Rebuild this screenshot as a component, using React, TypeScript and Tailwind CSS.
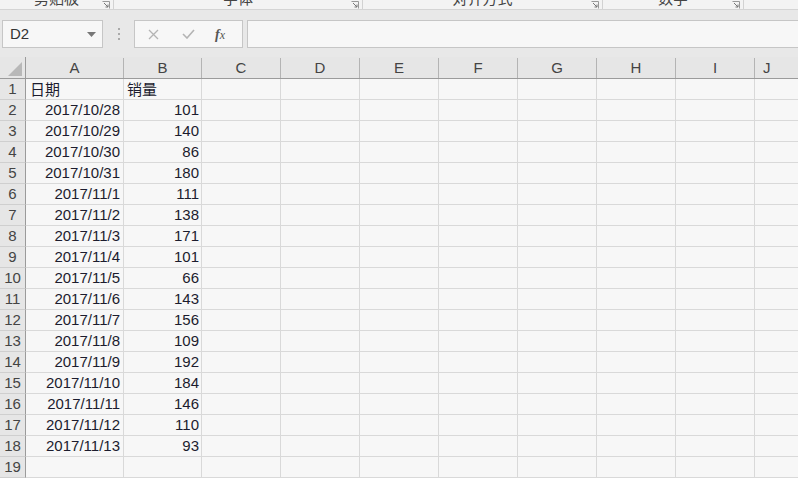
import React from 'react';

const rows: [string, string][] = [
  ['日期', '销量'],
  ['2017/10/28', '101'],
  ['2017/10/29', '140'],
  ['2017/10/30', '86'],
  ['2017/10/31', '180'],
  ['2017/11/1', '111'],
  ['2017/11/2', '138'],
  ['2017/11/3', '171'],
  ['2017/11/4', '101'],
  ['2017/11/5', '66'],
  ['2017/11/6', '143'],
  ['2017/11/7', '156'],
  ['2017/11/8', '109'],
  ['2017/11/9', '192'],
  ['2017/11/10', '184'],
  ['2017/11/11', '146'],
  ['2017/11/12', '110'],
  ['2017/11/13', '93'],
  ['', ''],
];

const otherCols = ['C', 'D', 'E', 'F', 'G', 'H', 'I'];

const font = { fontFamily: '"Liberation Sans", Arial, "Noto Sans CJK SC", sans-serif' };

const RibbonGroup = ({ label, width }: { label: string; width: string }) => (
  <div className={`relative flex h-full justify-center border-r border-[#d2d2d2] ${width}`}>
    <span className="absolute -top-[10px] text-[15px] leading-[18px] text-[#444]">{label}</span>
    <svg className="absolute right-[3px] top-[1px]" width="8" height="8" viewBox="0 0 8 8">
      <path d="M0.5 0.5h7v7" fill="none" stroke="#999" />
      <path d="M2 2l4 4M6 3.5V6H3.5" fill="none" stroke="#777" />
    </svg>
  </div>
);

export default function App() {
  return (
    <div className="h-[478px] w-[798px] overflow-hidden bg-[#e8e8e8]" style={font}>
      {/* ribbon group labels, cut off at the top */}
      <div className="flex h-[10px] overflow-hidden border-b border-[#d4d4d4] bg-[#f3f3f3]">
        <RibbonGroup label="剪贴板" width="w-[114px]" />
        <RibbonGroup label="字体" width="w-[249px]" />
        <RibbonGroup label="对齐方式" width="w-[240px]" />
        <RibbonGroup label="数字" width="w-[141px]" />
      </div>

      {/* formula bar */}
      <div className="mt-[10px] flex h-[28px] items-stretch">
        <div className="ml-[2px] flex w-[101px] items-center justify-between border border-[#c6c6c6] bg-[#f7f7f7] pl-[7px] pr-[6px]">
          <span className="text-[15px] text-[#333]">D2</span>
          <svg width="9" height="5" viewBox="0 0 9 5">
            <path d="M0 0h9L4.5 5z" fill="#777" />
          </svg>
        </div>
        <div className="flex w-[31px] flex-col items-center justify-center gap-[3px]">
          <span className="h-[2px] w-[2px] bg-[#aaa]" />
          <span className="h-[2px] w-[2px] bg-[#aaa]" />
          <span className="h-[2px] w-[2px] bg-[#aaa]" />
        </div>
        <div className="flex w-[109px] items-center border border-[#c6c6c6] bg-[#f7f7f7]">
          <svg className="ml-[13px]" width="11" height="11" viewBox="0 0 11 11">
            <path d="M1 1l9 9M10 1l-9 9" stroke="#b4b4b4" strokeWidth="1.3" />
          </svg>
          <svg className="ml-[23px]" width="13" height="10" viewBox="0 0 13 10">
            <path d="M1 5l4 4 7-8" fill="none" stroke="#b4b4b4" strokeWidth="1.6" />
          </svg>
          <span
            className="ml-[20px] text-[14px] italic text-[#555]"
            style={{ fontFamily: '"Liberation Serif", "Times New Roman", serif' }}
          >
            <span className="font-bold">f</span>
            <span className="text-[12px]">x</span>
          </span>
        </div>
        <div className="ml-[4px] flex-1 border border-r-0 border-[#c6c6c6] bg-[#f7f7f7]" />
      </div>

      {/* sheet */}
      <div className="mt-[9px]">
        {/* column headers */}
        <div className="flex h-[22px] border-b border-[#9b9b9b] bg-[#e6e6e6] pt-[1px] text-[15px] text-[#444]">
          <div className="relative -mt-[1px] w-[26px] shrink-0 border-r border-[#9b9b9b]">
            <svg className="absolute bottom-[2px] right-[3px]" width="14" height="14" viewBox="0 0 14 14">
              <path d="M14 0v14H0z" fill="#b8b8b8" />
            </svg>
          </div>
          <div className="flex w-[98px] shrink-0 items-center justify-center border-r border-[#b4b4b4]">A</div>
          <div className="flex w-[78px] shrink-0 items-center justify-center border-r border-[#b4b4b4]">B</div>
          {otherCols.map((c) => (
            <div key={c} className="flex w-[79px] shrink-0 items-center justify-center border-r border-[#b4b4b4]">
              {c}
            </div>
          ))}
          <div className="flex flex-1 items-center pl-[8px]">J</div>
        </div>

        {/* rows */}
        {rows.map(([a, b], i) => (
          <div key={i} className="flex h-[21px] text-[15px] text-[#1c1c2e]">
            <div className="flex w-[26px] shrink-0 items-center justify-center border-r border-b border-r-[#9b9b9b] border-b-[#cfcfcf] bg-[#e6e6e6] pt-[1px] text-[#444]">
              {i + 1}
            </div>
            <div
              className={`flex w-[98px] shrink-0 items-center border-r border-b border-[#d9d9d9] bg-[#f7f7f7] pt-[1px] ${
                i === 0 ? 'justify-start pl-[4px]' : 'justify-end pr-[3px]'
              }`}
              style={i === 0 ? { fontFamily: '"Noto Sans CJK SC", sans-serif' } : undefined}
            >
              {a}
            </div>
            <div
              className={`flex w-[78px] shrink-0 items-center border-r border-b border-[#d9d9d9] bg-[#f7f7f7] pt-[1px] ${
                i === 0 ? 'justify-start pl-[3px]' : 'justify-end pr-[2px]'
              }`}
              style={i === 0 ? { fontFamily: '"Noto Sans CJK SC", sans-serif' } : undefined}
            >
              {b}
            </div>
            {otherCols.map((c) => (
              <div key={c} className="w-[79px] shrink-0 border-r border-b border-[#d9d9d9] bg-[#f7f7f7]" />
            ))}
            <div className="flex-1 border-b border-[#d9d9d9] bg-[#f7f7f7]" />
          </div>
        ))}
      </div>
    </div>
  );
}
